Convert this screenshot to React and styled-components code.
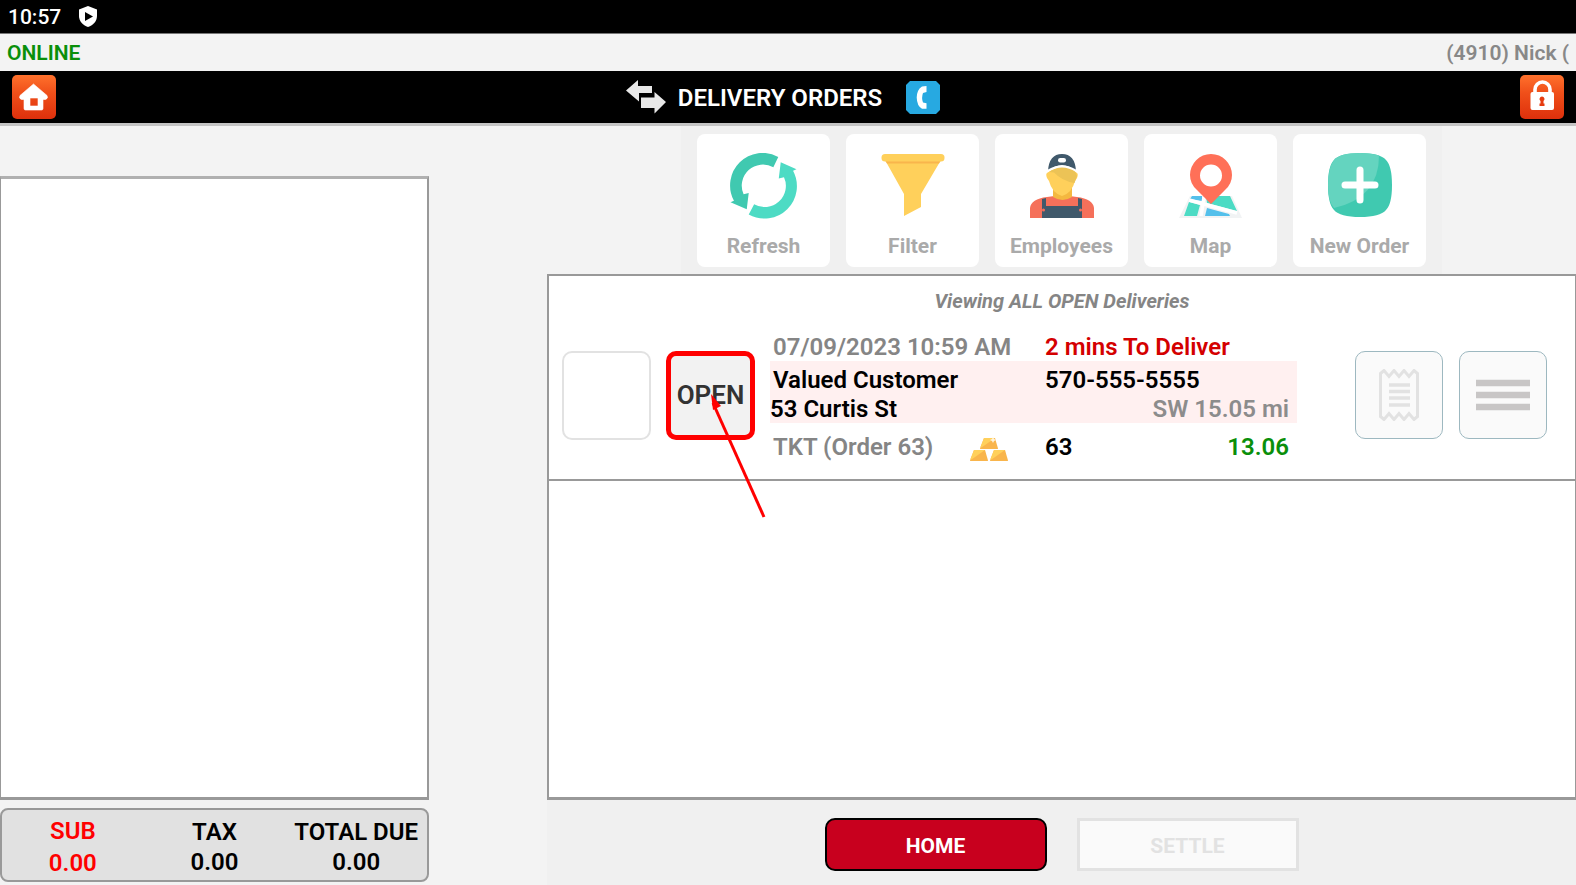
import React from "react";
import styled, { createGlobalStyle, css } from "styled-components";

const GlobalStyle = createGlobalStyle`
  *, *::before, *::after { box-sizing: border-box; }
  body {
    margin: 0;
    background: #f3f3f3;
    color: #000;
    font-family: Roboto, "Liberation Sans", sans-serif;
  }
  h1, p, dl, dt, dd { margin: 0; }
  button { font-family: inherit; padding: 0; cursor: pointer; }
  svg { display: block; }
`;

const Page = styled.div`
  display: flex;
  flex-direction: column;
  min-height: 100vh;
`;

const StatusBar = styled.div`
  display: flex;
  align-items: center;
  gap: 18px;
  height: 34px;
  padding-left: 8px;
  background: #000;
  border-bottom: 1px solid #777;
  color: #fff;
  font-size: 21px;
  font-weight: 500;
`;

const SessionBar = styled.div`
  display: flex;
  align-items: center;
  justify-content: space-between;
  height: 37px;
  padding: 0 7px;
  font-size: 21px;
  font-weight: 600;
`;

const Online = styled.span`
  color: #0a8f0a;
`;

const User = styled.span`
  color: #888;
`;

const TitleBar = styled.header`
  display: grid;
  grid-template-columns: 1fr auto 1fr;
  align-items: center;
  height: 55px;
  padding: 0 12px;
  background: #000;
  border-bottom: 3px solid #c4c4c4;
`;

const TitleGroup = styled.div`
  display: flex;
  align-items: center;
  gap: 12px;
  padding-right: 10px;
`;

const Title = styled.h1`
  margin-right: 12px;
  padding-top: 2px;
  color: #fff;
  font-size: 24px;
  font-weight: 600;
  line-height: 32px;
`;

const IconButton = styled.button`
  display: flex;
  border: 0;
  background: none;
  justify-self: ${(p) => p.$side || "auto"};
`;

const Content = styled.main`
  flex: 1;
  display: grid;
  grid-template-columns: 429fr 118fr 1029fr;
`;

const TicketColumn = styled.section`
  display: flex;
  flex-direction: column;
  padding-top: 50px;
`;

const TicketList = styled.div`
  flex: 1;
  background: #fff;
  border: 1px solid #999;
  border-width: 3px 2px 3px 1px;
  border-color: #b0b0b0 #999 #999 #999;
`;

const Totals = styled.dl`
  display: grid;
  grid-template-columns: repeat(3, 1fr);
  align-items: center;
  height: 74px;
  margin: 8px 0 3px;
  padding-top: 4px;
  background: #e1e1e1;
  border: 2px solid #999;
  border-radius: 8px;
`;

const Total = styled.div`
  text-align: center;
  white-space: nowrap;
  font-size: 24px;
  font-weight: 600;
  line-height: ${(p) => (p.$due ? 32 : 30)}px;
  color: ${(p) => (p.$due ? "#f00" : "#000")};
`;

const DeliveryColumn = styled.section`
  grid-column: 3;
  display: flex;
  flex-direction: column;
`;

const Toolbar = styled.nav`
  display: flex;
  align-self: center;
  gap: 16px;
  padding: 8px 16px 7px;
  background: #f0f0f0;
`;

const Tile = styled.button`
  display: flex;
  flex-direction: column;
  align-items: center;
  justify-content: space-between;
  width: 133px;
  height: 133px;
  padding: 19px 0 8px;
  border: 0;
  border-radius: 8px;
  background: #fff;
  color: #aaa;
  font-size: 21px;
  font-weight: 700;
  line-height: 25px;
`;

const Panel = styled.div`
  flex: 1;
  background: #fff;
  border: 2px solid #999;
  border-width: 2px 1px 3px 2px;
`;

const Caption = styled.p`
  padding: 13px 0 11px;
  text-align: center;
  color: #858585;
  font-size: 20px;
  font-style: italic;
  font-weight: 700;
  line-height: 24px;
`;

const Delivery = styled.article`
  display: flex;
  align-items: center;
  gap: 15px;
  height: 157px;
  padding: 0 28px 13px 13px;
  border-bottom: 2px solid #999;
`;

const Square = styled.button`
  display: flex;
  align-items: center;
  justify-content: center;
  flex: none;
  width: 88px;
  height: 88px;
  border: 1px solid #9db8c0;
  border-radius: 10px;
  background: #fafafa;
  color: #333;
  font-size: 26px;
  font-weight: 600;
  ${(p) =>
    p.$open &&
    css`
      position: relative;
      width: 89px;
      height: 89px;
      border: 5px solid #f00;
      background: #f2f2f2;
    `}
`;

const SelectBox = styled.input`
  appearance: none;
  flex: none;
  width: 89px;
  height: 89px;
  margin: 0;
  border: 2px solid #e2e2e2;
  border-radius: 10px;
  background: #fff;
`;

const Pointer = styled.svg`
  position: absolute;
  top: 33px;
  left: 35px;
  overflow: visible;
  pointer-events: none;
`;

const Details = styled.div`
  display: flex;
  flex-direction: column;
  align-self: flex-start;
  width: 527px;
  padding-top: 8px;
  font-size: 24px;
  font-weight: 600;
  line-height: 28px;
  white-space: nowrap;
`;

const Customer = styled.div`
  padding-top: 4px;
  background: #fff0f0;
`;

const Line = styled.div`
  display: grid;
  grid-template-columns: 197px 75px 1fr auto;
  align-items: center;
  height: ${(p) => p.$height}px;
  padding: 0 8px 0 ${(p) => (p.$flush ? 0 : 3)}px;
`;

const Cell = styled.span`
  grid-column: ${(p) => p.$col || "auto"};
  color: ${(p) => p.$color || "#000"};
`;

const Actions = styled.div`
  display: flex;
  gap: 16px;
  margin-left: auto;
`;

const Footer = styled.footer`
  display: flex;
  justify-content: center;
  gap: 30px;
  padding: 18px 0 14px;
  background: #f0f0f0;
`;

const FooterButton = styled.button`
  width: 222px;
  height: 53px;
  padding-top: 2px;
  border: ${(p) => (p.$primary ? "2px solid #000" : "3px solid #e2e2e2")};
  border-radius: ${(p) => (p.$primary ? 10 : 0)}px;
  background: ${(p) => (p.$primary ? "#c8001e" : "#fafafa")};
  color: ${(p) => (p.$primary ? "#fff" : "#e2e2e2")};
  font-size: 21px;
  font-weight: 700;
`;

const ShieldIcon = () => (
  <svg width="18" height="21" viewBox="0 0 18 21" aria-hidden="true">
    <path d="M9 0 18 3.400V10c0 5-3.600 9-9 11C3.600 19 0 15 0 10V3.400z" fill="#fff" />
    <path d="M6 6v9l8-4.500z" fill="#000" />
  </svg>
);

const OrangeBadge = ({ id, children }) => (
  <svg width="44" height="44" viewBox="0 0 44 44" aria-hidden="true">
    <defs>
      <linearGradient id={id} x1="0" y1="0" x2="0" y2="1">
        <stop offset="0" stopColor="#ff712c" />
        <stop offset="0.4" stopColor="#f0501a" />
        <stop offset="1" stopColor="#de300c" />
      </linearGradient>
    </defs>
    <rect width="44" height="44" rx="5" fill={`url(#${id})`} />
    {children}
  </svg>
);

const HomeIcon = () => (
  <OrangeBadge id="home-badge">
    <path
      d="M21.500 9 35 20.500q1.500 3-1.500 4H31v9q0 1.500-1.500 1.500h-16Q12 35 12 33.500v-9H9.500q-3-1-1.500-4zM18 23v8h8v-8z"
      fill="#fff"
      fillRule="evenodd"
      stroke="#fff"
      strokeWidth="0.6"
      strokeLinejoin="round"
    />
  </OrangeBadge>
);

const LockIcon = () => (
  <OrangeBadge id="lock-badge">
    <path d="M15 18v-3.500a7.500 7.500 0 0 1 15 0V18" fill="none" stroke="#fff" strokeWidth="3.600" />
    <rect x="10.500" y="17" width="23.500" height="18" rx="2" fill="#fff" />
    <path d="M22 21.500a2.500 2.500 0 0 1 1.500 4.500v2.500h1V31h-5v-2.500h1V26a2.500 2.500 0 0 1 1.500-4.500z" fill="#e63c10" />
  </OrangeBadge>
);

const SwapIcon = () => (
  <svg width="40" height="34" viewBox="0 0 40 34" aria-hidden="true" fill="#e8e8e8">
    <path d="M0 10.500 12 0v6h14v7H13v8.500z" />
    <path d="M40 22 28.500 12v5.500H15V28h13.500v5.500z" />
  </svg>
);

const PhoneIcon = () => (
  <svg width="34" height="33" viewBox="0 0 34 33" aria-hidden="true">
    <path d="M4 0h26l4 4v25l-4 4H4l-4-4V4z" fill="#27a9e1" />
    <path
      d="M16 5.500 20.500 5v6l-3.500 1q-1.800 5 0 9.500l3.500.7v5.500h-4.500q-5-2.500-5.300-11.200Q11 8.500 16 5.500z"
      fill="#fff"
    />
  </svg>
);

const RefreshIcon = () => (
  <svg width="67" height="66" viewBox="0 0 67 67" aria-hidden="true">
    <path d="M48.500 4A33 33 0 0 0 3.500 48.500L0 50l16.500 7 2-16.500-5.200 1.500A21.500 21.500 0 0 1 43.500 14.500z" fill="#40c9b0" />
    <path d="M18.500 62.500a33 33 0 0 0 45-44.500L67 16.500 51 9.500l-2 16.500 5.300-1.500A21.500 21.500 0 0 1 24 52z" fill="#4ddbc4" />
  </svg>
);

const FilterIcon = () => (
  <svg width="64" height="64" viewBox="0 0 64 64" aria-hidden="true">
    <path d="M4 7h56L40 41v13l-17 9V41z" fill="#ffd05b" />
    <path d="M4.500 8h55L58 10.500H6z" fill="#f9b54c" />
    <rect x="0.500" y="1" width="63" height="7.500" rx="3.500" fill="#ffd05b" />
  </svg>
);

const EmployeeIcon = () => (
  <svg width="64" height="65" viewBox="0 -1 64 65" aria-hidden="true">
    <path d="M0 64V54Q1 45 17 43l15-2 15 2q16 2 17 11v10z" fill="#f5705a" />
    <path d="M23 34h19v9q-9.500 6-19 0z" fill="#f4b840" />
    <path d="M17 19q15-11 30 0 1.500 1 0 5l-2 3q-3 12-13 15-10-3-13-15l-2-3q-1.500-4 0-5z" fill="#ffd05b" />
    <path d="M19 18q14-10 26-1l2 5-2.500 7Q32 27 24 18.500z" fill="#ecc356" />
    <path d="M18 17q1-17 14-17t14 17q-14-12-28 0z" fill="#40596b" />
    <path d="M18 15.500q14-8 28 0v2.500q-14-9-28 0z" fill="#fff" />
    <rect x="28" y="4" width="8" height="4.500" rx="2.200" fill="#fff" />
    <path d="M12 45l4-1v8h32v-8l4 1v19H12z" fill="#40596b" />
    <circle cx="13.500" cy="56" r="1.500" fill="#f5705a" />
    <circle cx="50.500" cy="56" r="1.500" fill="#f5705a" />
  </svg>
);

const MapIcon = () => (
  <svg width="64" height="65" viewBox="0 -1 64 65" aria-hidden="true">
    <path d="M11 42h42l10 22H0z" fill="#f1f3f4" />
    <path d="M13 42h10v5l-12-2zM28 54l22 6 1 2H26z" fill="#54c0eb" />
    <path d="M10 48l11 3-3 11H5zM27 42h24l7 15-30-8z" fill="#4cdbc4" />
    <path d="M10 46 58 59M25 43l-3 19" stroke="#fff" strokeWidth="3.500" />
    <path
      d="M32 0a21 21 0 0 1 21 21q0 9-7 15L32 50 18 36q-7-6-7-15A21 21 0 0 1 32 0zm0 10.500a11 11 0 1 0 0 22 11 11 0 0 0 0-22z"
      fill="#ff7058"
      fillRule="evenodd"
    />
  </svg>
);

const NewOrderIcon = () => (
  <svg width="64" height="64" viewBox="0 0 64 64" aria-hidden="true">
    <path d="M32 0q20 0 26 7 6 6 6 25t-6 25q-6 7-26 7T6 57Q0 51 0 32T6 7q6-7 26-7z" fill="#40c9b0" />
    <path d="M32 0q12 0 19 2.500Q51 45 6 55 0 49 0 32T6 7q6-7 26-7z" fill="#64d4bf" />
    <path d="M32 17v30M17 32h30" stroke="#fff" strokeWidth="7" strokeLinecap="round" />
  </svg>
);

const GoldIcon = () => (
  <svg width="38" height="30" viewBox="0 -6 38 30" aria-hidden="true">
    {[[10, 0], [0, 12], [20, 12]].map(([x, y]) => (
      <g key={`${x}-${y}`} transform={`translate(${x} ${y})`}>
        <path d="M4 0h11l3 10.500q0 .5-1 .5H1q-1 0-1-.5z" fill="#f9b54c" />
        <path d="M4 0h11L1.500 9.500.500 9z" fill="#ffd05b" />
      </g>
    ))}
    <path d="M23 -1l1 2 2 1-2 1-1 2-1-2-2-1 2-1z" fill="#fff3dc" />
  </svg>
);

const ReceiptIcon = () => (
  <svg width="40" height="52" viewBox="0 0 40 52" aria-hidden="true" fill="none" stroke="#e2e2e2">
    <path
      d="M1.500 4.500 5 1.500l5 6 5-6 5 6 5-6 5 6 5-6 3.500 3v43l-3.500 3-5-6-5 6-5-6-5 6-5-6-5 6-3.500-3z"
      strokeWidth="3"
    />
    <path d="M10 16h21M10 22.500h21M10 29h21M10 36h21" strokeWidth="3.500" />
  </svg>
);

const MenuIcon = () => (
  <svg width="54" height="32" viewBox="0 0 54 32" aria-hidden="true">
    <path d="M0 4h54M0 16h54M0 28h54" stroke="#c8c6c6" strokeWidth="6.500" />
  </svg>
);

const tools = [
  ["Refresh", RefreshIcon],
  ["Filter", FilterIcon],
  ["Employees", EmployeeIcon],
  ["Map", MapIcon],
  ["New Order", NewOrderIcon],
];

export default function App() {
  return (
    <Page>
      <GlobalStyle />
      <StatusBar>
        <span>10:57</span>
        <ShieldIcon />
      </StatusBar>
      <SessionBar>
        <Online>ONLINE</Online>
        <User>(4910) Nick (</User>
      </SessionBar>
      <TitleBar>
        <IconButton type="button" aria-label="Home" $side="start">
          <HomeIcon />
        </IconButton>
        <TitleGroup>
          <SwapIcon />
          <Title>DELIVERY ORDERS</Title>
          <IconButton type="button" aria-label="Call">
            <PhoneIcon />
          </IconButton>
        </TitleGroup>
        <IconButton type="button" aria-label="Lock" $side="end">
          <LockIcon />
        </IconButton>
      </TitleBar>
      <Content>
        <TicketColumn>
          <TicketList />
          <Totals>
            <Total $due>
              <dt>SUB</dt>
              <dd>0.00</dd>
            </Total>
            <Total>
              <dt>TAX</dt>
              <dd>0.00</dd>
            </Total>
            <Total>
              <dt>TOTAL DUE</dt>
              <dd>0.00</dd>
            </Total>
          </Totals>
        </TicketColumn>
        <DeliveryColumn>
          <Toolbar>
            {tools.map(([label, Icon]) => (
              <Tile key={label} type="button">
                <Icon />
                {label}
              </Tile>
            ))}
          </Toolbar>
          <Panel>
            <Caption>Viewing ALL OPEN Deliveries</Caption>
            <Delivery>
              <SelectBox type="checkbox" aria-label="Select delivery" />
              <Square type="button" $open>
                OPEN
                <Pointer width="60" height="130" viewBox="0 0 60 130" aria-hidden="true">
                  <path d="M7 14 58 128" stroke="#f00" strokeWidth="3" />
                  <path d="M5 5l10 12-8 4z" fill="#f00" />
                </Pointer>
              </Square>
              <Details>
                <Line $height={29}>
                  <Cell $color="#858585">07/09/2023 10:59 AM</Cell>
                  <Cell $col="3" $color="#d40000">2 mins To Deliver</Cell>
                </Line>
                <Customer>
                  <Line $height={30}>
                    <Cell>Valued Customer</Cell>
                    <Cell $col="3">570-555-5555</Cell>
                  </Line>
                  <Line $height={28} $flush>
                    <Cell>53 Curtis St</Cell>
                    <Cell $col="4" $color="#8c8c8c">SW 15.05 mi</Cell>
                  </Line>
                </Customer>
                <Line $height={48}>
                  <Cell $color="#858585">TKT (Order 63)</Cell>
                  <GoldIcon />
                  <Cell>63</Cell>
                  <Cell $color="#0a8f0a">13.06</Cell>
                </Line>
              </Details>
              <Actions>
                <Square type="button" aria-label="Receipt">
                  <ReceiptIcon />
                </Square>
                <Square type="button" aria-label="Menu">
                  <MenuIcon />
                </Square>
              </Actions>
            </Delivery>
          </Panel>
          <Footer>
            <FooterButton type="button" $primary>HOME</FooterButton>
            <FooterButton type="button" disabled>SETTLE</FooterButton>
          </Footer>
        </DeliveryColumn>
      </Content>
    </Page>
  );
}
